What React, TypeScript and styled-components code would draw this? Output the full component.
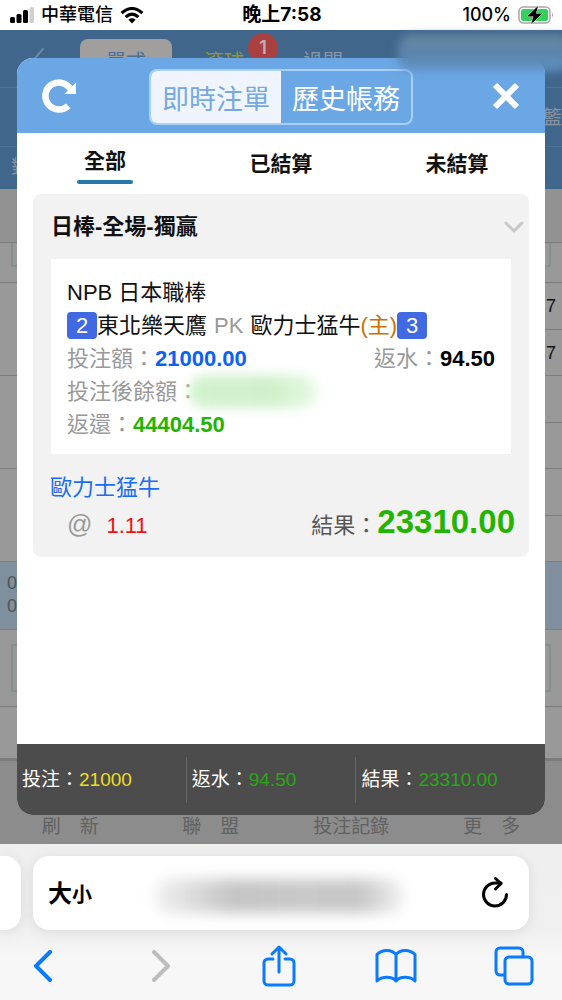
import React from "react";
import styled, { createGlobalStyle } from "styled-components";

const GlobalStyle = createGlobalStyle`
  *, *::before, *::after { box-sizing: border-box; }
  body { margin: 0; background: #fff; font-family: "Liberation Sans", "Noto Sans CJK TC", sans-serif; color: #111; }
  button { margin: 0; padding: 0; border: 0; background: none; font: inherit; color: inherit; cursor: pointer; }
  svg { display: block; flex: none; }
  p, h1, h2, dl, dd, dt { margin: 0; font-weight: inherit; font-size: inherit; }
  a { color: inherit; text-decoration: none; }
`;

const Screen = styled.div`
  display: flex;
  flex-direction: column;
  min-height: 100vh;
  overflow: hidden;
`;

/* ---------- phone status bar ---------- */

const StatusBar = styled.header`
  display: grid;
  grid-template-columns: 1fr auto 1fr;
  align-items: center;
  height: 30px;
  padding: 0 8px 0 10px;
  background: #fff;
  font: 500 18px/30px Inter, "Noto Sans CJK TC", sans-serif;
  color: #000;
`;

const StatusGroup = styled.div<{ $end?: boolean }>`
  display: flex;
  align-items: center;
  gap: 7px;
  justify-content: ${(p) => (p.$end ? "flex-end" : "flex-start")};
`;

const Clock = styled.time`
  font-size: 19px;
  font-weight: 700;
`;

/* ---------- dimmed betting page ---------- */

const Stage = styled.main`
  flex: 1;
  display: grid;
  position: relative;
`;

const Page = styled.div`
  grid-area: 1 / 1;
  display: flex;
  flex-direction: column;
  min-width: 0;
  background: #999;
`;

const PageHead = styled.div`
  background: #41668c;
`;

const ModeRow = styled.div`
  display: grid;
  grid-template-columns: 76px 100px 1fr;
  height: 58px;
  border-bottom: 1px solid #4f7397;
  font-size: 20px;
  line-height: 46px;
  color: #8c98a4;
`;

const BackLink = styled.button`
  padding: 12px 0 0 28px;
`;

const ModeButton = styled.button<{ $active?: boolean }>`
  height: 46px;
  margin: 9px 4px 0;
  border-radius: 8px;
  text-align: center;
  background: ${(p) => (p.$active ? "#a09f9e" : "none")};
  color: ${(p) => (p.$active ? "#4a6f96" : "#8c98a4")};
`;

const ModeList = styled.div`
  display: flex;
  gap: 59px;
  padding: 9px 0 0 28px;
`;

const ModeItem = styled.button<{ $live?: boolean }>`
  position: relative;
  height: 46px;
  color: ${(p) => (p.$live ? "#96982f" : "#8c98a4")};
`;

const LiveCount = styled.span`
  position: absolute;
  left: 44px;
  top: -6px;
  width: 30px;
  height: 30px;
  border-radius: 50%;
  background: #a84040;
  color: #c4b0b0;
  font: 600 18px/30px Inter, sans-serif;
  text-align: center;
`;

const SportRow = styled.div`
  height: 59px;
  border-bottom: 1px solid #4f7397;
  text-align: right;
  font-size: 19px;
  line-height: 60px;
  color: #8693a1;
`;

const ColumnRow = styled.div`
  height: 42px;
  padding-left: 11px;
  font-size: 19px;
  line-height: 42px;
  color: #8693a1;
`;

const BoardRow = styled.div<{ $h: number; $tone?: "head" | "blue" }>`
  display: flex;
  justify-content: space-between;
  height: ${(p) => p.$h}px;
  border-bottom: 1px solid #7c7c7c;
  background: ${(p) =>
    p.$tone === "head" ? "#929292" : p.$tone === "blue" ? "#7f8f9d" : "#999"};
`;

const Scores = styled.div`
  padding: 10px 7px;
  font-size: 18px;
  line-height: 23px;
  color: #4c545c;
`;

const OddsColumn = styled.div`
  flex: 0 0 50%;
  display: flex;
  flex-direction: column;
`;

const Odds = styled.span`
  flex: 1;
  padding-right: 6px;
  border-bottom: 1px solid #7c7c7c;
  text-align: right;
  font-size: 18px;
  line-height: 46px;
  color: #111;
  &:last-child { border-bottom: 0; }
`;

const LeagueBox = styled.div<{ $h: number; $cut?: boolean }>`
  flex: 1;
  height: ${(p) => p.$h}px;
  margin: ${(p) => (p.$cut ? "0 11px" : "14px 11px 0")};
  border: 2px solid #82908e;
  ${(p) => p.$cut && "border-top: 0;"}
`;

const PageNav = styled.nav`
  flex: 1;
  display: grid;
  grid-template-columns: repeat(4, 1fr);
  align-items: end;
  min-height: 85px;
  padding-bottom: 3px;
  border-top: 2px solid #7c7c7c;
  background: #8c8c8c;
  text-align: center;
  font-size: 19px;
  line-height: 28px;
  color: #616161;
`;

const HiddenAccount = styled.div`
  position: absolute;
  z-index: 2;
  top: 5px;
  right: -10px;
  width: 174px;
  height: 36px;
  border-radius: 14px;
  background: linear-gradient(#6a8ba3, #5a82aa 50%, #6295c8);
  filter: blur(5px);
`;

/* ---------- bet slip dialog ---------- */

const Dialog = styled.section`
  grid-area: 1 / 1;
  z-index: 1;
  display: flex;
  flex-direction: column;
  min-width: 0;
  margin: 28px 17px 29px;
  border-radius: 16px;
  overflow: hidden;
  background: #fff;
`;

const DialogHead = styled.div`
  display: flex;
  align-items: center;
  justify-content: space-between;
  height: 75px;
  padding: 0 24px;
  background: #6ba7e4;
  color: #fff;
`;

const HeadButton = styled.button`
  display: flex;
  justify-content: flex-start;
  width: 36px;
  &:last-child { width: 30px; }
`;

const Segments = styled.div`
  display: flex;
  width: 264px;
  height: 56px;
  margin: 2px 6px 0 0;
  border: 2px solid #a8d0f8;
  border-radius: 8px;
  overflow: hidden;
`;

const Segment = styled.button<{ $active?: boolean }>`
  flex: 1;
  font-size: 27px;
  line-height: 58px;
  white-space: nowrap;
  background: ${(p) => (p.$active ? "#f0f5fd" : "none")};
  color: ${(p) => (p.$active ? "#77a9e0" : "#fff")};
`;

const Tabs = styled.div`
  display: grid;
  grid-template-columns: repeat(3, 1fr);
  justify-items: center;
  height: 61px;
  padding-top: 9px;
`;

const Tab = styled.button<{ $active?: boolean }>`
  height: 42px;
  min-width: 56px;
  font-size: 21px;
  font-weight: 700;
  line-height: ${(p) => (p.$active ? 38 : 44)}px;
  color: #111;
  &::after {
    content: "";
    display: ${(p) => (p.$active ? "block" : "none")};
    height: 4px;
    border-radius: 2px;
    background: #2678a6;
  }
`;

const Card = styled.article`
  margin: 0 16px;
  border-radius: 8px;
  background: #f2f2f2;
  font-size: 22px;
  line-height: 33px;
`;

const CardHead = styled.div`
  display: flex;
  align-items: center;
  justify-content: space-between;
  height: 65px;
  padding: 0 5px 0 18px;
`;

const CardTitle = styled.h2`
  font-weight: 700;
  color: #111;
`;

const Ticket = styled.div`
  margin: 0 18px;
  padding: 17px 16px 13px;
  background: #fff;
`;

const Line = styled.div`
  display: flex;
  justify-content: space-between;
  white-space: nowrap;
`;

const Matchup = styled.p`
  display: flex;
  align-items: center;
  white-space: nowrap;
`;

const Score = styled.span`
  width: 30px;
  height: 27px;
  border-radius: 4px;
  background: #4169e1;
  color: #fff;
  text-align: center;
  line-height: 27px;
`;

const Versus = styled.span`
  padding: 0 7px;
  color: #999;
`;

const Home = styled.span`
  color: #cc6f00;
`;

const Field = styled.dl<{ $tone?: string }>`
  display: flex;
  dt { color: #999; }
  dd { font-weight: 700; color: ${(p) => p.$tone || "#000"}; }
`;

const HiddenBalance = styled.dd`
  width: 128px;
  height: 33px;
  margin-left: -10px;
  border-radius: 16px;
  background: linear-gradient(90deg, #d2f2cd, #d0f0ca 65%, #e8f9e5);
  filter: blur(6px);
`;

const Outcome = styled.div`
  padding: 17px 14px 15px 17px;
`;

const Pick = styled.p`
  color: #1a6df0;
`;

const ResultRow = styled.div`
  display: flex;
  align-items: baseline;
  justify-content: space-between;
  height: 38px;
  line-height: 36px;
`;

const Price = styled.p`
  padding-left: 17px;
  color: #f01010;
  span { margin-right: 14px; font-size: 25px; color: #999; }
`;

const Result = styled.p`
  color: #555;
  strong { font-size: 33px; color: #22b400; }
`;

const Totals = styled.footer`
  display: grid;
  grid-template-columns: 9fr 9fr 10fr;
  align-items: center;
  height: 71px;
  margin-top: auto;
  background: #4c4c4c;
  color: #fff;
  font-size: 19px;
  line-height: 46px;
  white-space: nowrap;
`;

const Total = styled.p<{ $tone: string }>`
  padding-left: 5px;
  border-right: 1px solid #666;
  &:last-child { border-right: 0; }
  span { color: ${(p) => p.$tone}; }
`;

/* ---------- browser chrome ---------- */

const BrowserBar = styled.footer`
  padding-top: 12px;
  height: 156px;
  background: linear-gradient(#efefef, #f0f0f0 55%, #f7f7f7 75%);
`;

const AddressRow = styled.div`
  display: flex;
  gap: 12px;
  padding-right: 33px;
`;

const PreviousTab = styled.div`
  width: 21px;
  height: 74px;
  border-radius: 0 16px 16px 0;
  background: #fff;
  box-shadow: 0 2px 14px rgba(0, 0, 0, 0.09);
`;

const Address = styled.div`
  flex: 1;
  display: flex;
  align-items: center;
  justify-content: space-between;
  height: 74px;
  padding: 0 20px 0 15px;
  border-radius: 16px;
  background: #fff;
  box-shadow: 0 2px 14px rgba(0, 0, 0, 0.09);
  color: #000;
`;

const TextSize = styled.button`
  padding-top: 2px;
  font-size: 24px;
  font-weight: 700;
  line-height: 32px;
  small { font-size: 20px; }
`;

const HiddenUrl = styled.div`
  width: 250px;
  height: 34px;
  margin: 6px 16px 0 0;
  border-radius: 14px;
  background: linear-gradient(90deg, #f2f2f2, #c4c4c4 32%, #c8c8c8 60%, #c6c6c6 82%, #f2f2f2);
  filter: blur(7px);
`;

const Toolbar = styled.nav`
  display: flex;
  align-items: center;
  justify-content: space-between;
  height: 70px;
  padding: 1px 28px 0 23px;
`;

const Tool = styled.button<{ $off?: boolean }>`
  display: flex;
  justify-content: center;
  width: 40px;
  color: ${(p) => (p.$off ? "#bdbdbd" : "#0a7aff")};
`;

const Icon = ({ w, h, sw = 3, children }: { w: number; h: number; sw?: number; children: React.ReactNode }) => (
  <svg width={w} height={h} viewBox={`0 0 ${w} ${h}`} fill="none" stroke="currentColor"
    strokeWidth={sw} strokeLinecap="round" strokeLinejoin="round" aria-hidden="true">
    {children}
  </svg>
);

export default function App() {
  return (
    <Screen>
      <GlobalStyle />
      <StatusBar>
        <StatusGroup>
          <svg width="24" height="16" viewBox="0 0 24 16" aria-hidden="true">
            <rect x="0" y="10" width="5" height="6" rx="1.500" />
            <rect x="6.500" y="7" width="5" height="9" rx="1.500" />
            <rect x="13" y="3" width="5" height="13" rx="1.500" />
            <rect x="19.500" y="0" width="4.500" height="16" rx="1.500" fill="#d0d0d0" />
          </svg>
          <span>中華電信</span>
          <svg width="24" height="17" viewBox="0 0 24 17" fill="none" stroke="#000" strokeWidth="3" aria-hidden="true">
            <path d="M1.600 6.200Q12-3.200 22.400 6.200" />
            <path d="M5.600 10.200Q12 4.200 18.400 10.200" />
            <path d="M12 16.500L8.400 12.800Q12 9.900 15.600 12.800Z" fill="#000" stroke="none" />
          </svg>
        </StatusGroup>
        <Clock>晚上7:58</Clock>
        <StatusGroup $end>
          <span>100%</span>
          <svg width="36" height="18" viewBox="0 0 36 18" aria-hidden="true">
            <rect x="1" y="1" width="31" height="16" rx="4.500" fill="#fff" stroke="#a8a8a8" strokeWidth="1.500" />
            <rect x="3" y="3" width="27" height="12" rx="2.500" fill="#35cf5b" />
            <path d="M34 6.500q2 2.500 0 5z" fill="#a8a8a8" />
            <path d="M20 0L9 10.500h6.500L13 18 24.500 7.500h-6.500z" fill="#000" stroke="#fff" strokeWidth="1" paintOrder="stroke" />
          </svg>
        </StatusGroup>
      </StatusBar>

      <Stage>
        <Page>
          <PageHead>
            <ModeRow>
              <BackLink aria-label="返回">
                <Icon w={16} h={36} sw={2}><path d="M15 2L1 18l14 16" stroke="#6a89a8" /></Icon>
              </BackLink>
              <ModeButton $active>單式</ModeButton>
              <ModeList>
                <ModeItem $live>滾球<LiveCount>1</LiveCount></ModeItem>
                <ModeItem>過關</ModeItem>
              </ModeList>
            </ModeRow>
            <SportRow>籃</SportRow>
            <ColumnRow>對</ColumnRow>
          </PageHead>
          <BoardRow $h={54} $tone="head" />
          <BoardRow $h={40}><LeagueBox $h={24} $cut /></BoardRow>
          <BoardRow $h={93}>
            <Scores />
            <OddsColumn><Odds>7</Odds><Odds>7</Odds></OddsColumn>
          </BoardRow>
          <BoardRow $h={93}>
            <Scores />
            <OddsColumn><Odds /><Odds /></OddsColumn>
          </BoardRow>
          <BoardRow $h={93}>
            <Scores />
            <OddsColumn><Odds /><Odds /></OddsColumn>
          </BoardRow>
          <BoardRow $h={68} $tone="blue"><Scores>0<br />0</Scores></BoardRow>
          <BoardRow $h={77}><LeagueBox $h={48} /></BoardRow>
          <BoardRow $h={52} />
          <PageNav>
            <a href="#refresh">刷　新</a>
            <a href="#league">聯　盟</a>
            <a href="#records">投注記錄</a>
            <a href="#more">更　多</a>
          </PageNav>
        </Page>

        <Dialog role="dialog" aria-label="即時注單">
          <DialogHead>
            <HeadButton aria-label="重新整理">
              <svg width="36" height="36" viewBox="0 0 36 36" fill="none" aria-hidden="true">
                <path d="M27.200 27.800A13.500 13.500 0 1 1 30 12" stroke="#fff" strokeWidth="6.500" />
                <path d="M35 4.500v11.500H23.500z" fill="#fff" />
              </svg>
            </HeadButton>
            <Segments>
              <Segment $active>即時注單</Segment>
              <Segment>歷史帳務</Segment>
            </Segments>
            <HeadButton aria-label="關閉">
              <svg width="30" height="30" viewBox="0 0 30 30" stroke="#fff" strokeWidth="6" aria-hidden="true">
                <path d="M4 4l22 22M26 4L4 26" />
              </svg>
            </HeadButton>
          </DialogHead>

          <Tabs>
            <Tab $active>全部</Tab>
            <Tab>已結算</Tab>
            <Tab>未結算</Tab>
          </Tabs>

          <Card>
            <CardHead>
              <CardTitle>日棒-全場-獨贏</CardTitle>
              <button aria-label="收合">
                <Icon w={20} h={12}><path d="M2 2l8 8 8-8" stroke="#c8c8c8" /></Icon>
              </button>
            </CardHead>
            <Ticket>
              <p>NPB 日本職棒</p>
              <Matchup>
                <Score>2</Score>東北樂天鷹<Versus>PK</Versus>歐力士猛牛<Home>(主)</Home><Score>3</Score>
              </Matchup>
              <Line>
                <Field $tone="#0a62f5"><dt>投注額：</dt><dd>21000.00</dd></Field>
                <Field><dt>返水：</dt><dd>94.50</dd></Field>
              </Line>
              <Field><dt>投注後餘額：</dt><HiddenBalance /></Field>
              <Field $tone="#22b400"><dt>返還：</dt><dd>44404.50</dd></Field>
            </Ticket>
            <Outcome>
              <Pick>歐力士猛牛</Pick>
              <ResultRow>
                <Price><span>@</span>1.11</Price>
                <Result>結果：<strong>23310.00</strong></Result>
              </ResultRow>
            </Outcome>
          </Card>

          <Totals>
            <Total $tone="#f0dc1e">投注：<span>21000</span></Total>
            <Total $tone="#28a814">返水：<span>94.50</span></Total>
            <Total $tone="#28a814">結果：<span>23310.00</span></Total>
          </Totals>
        </Dialog>
        <HiddenAccount />
      </Stage>

      <BrowserBar>
        <AddressRow>
          <PreviousTab />
          <Address>
            <TextSize>大<small>小</small></TextSize>
            <HiddenUrl />
            <button aria-label="重新載入">
              <Icon w={28} h={32}>
                <path d="M25.500 17.500A11.500 11.500 0 1 1 14 6h6" />
                <path d="M14.500 1.500l5.500 5-5.500 5.500" />
              </Icon>
            </button>
          </Address>
        </AddressRow>
        <Toolbar>
          <Tool aria-label="上一頁"><Icon w={20} h={32} sw={4}><path d="M17 2L3 16l14 14" /></Icon></Tool>
          <Tool aria-label="下一頁" $off><Icon w={20} h={32} sw={4}><path d="M3 2l14 14L3 30" /></Icon></Tool>
          <Tool aria-label="分享">
            <Icon w={34} h={42}>
              <path d="M11 14H6a4 4 0 0 0-4 4v18a4 4 0 0 0 4 4h22a4 4 0 0 0 4-4V18a4 4 0 0 0-4-4h-5" />
              <path d="M17 27V2.500M10 9l7-7 7 7" />
            </Icon>
          </Tool>
          <Tool aria-label="書籤">
            <Icon w={42} h={36}>
              <path d="M21 6.500C17 1 7 1 2 6.500V33c5-5 15-5 19 0 4-5 14-5 19 0V6.500C35 1 25 1 21 6.500zV33" />
            </Icon>
          </Tool>
          <Tool aria-label="分頁">
            <Icon w={40} h={40}>
              <path d="M10 29H6a4 4 0 0 1-4-4V6a4 4 0 0 1 4-4h19a4 4 0 0 1 4 4v4" />
              <rect x="11" y="11" width="27" height="27" rx="4" />
            </Icon>
          </Tool>
        </Toolbar>
      </BrowserBar>
    </Screen>
  );
}
